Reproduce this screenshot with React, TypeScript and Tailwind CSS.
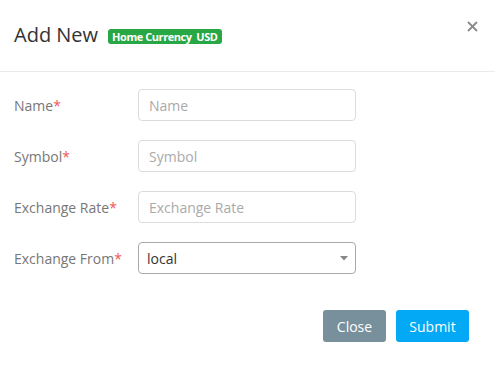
import { useState } from 'react';

const FONT = { fontFamily: '"Open Sans", "Liberation Sans", sans-serif' };

function Row({ label, children }: { label: string; children: React.ReactNode }) {
  return (
    <div className="flex items-center">
      <label className="w-[124px] shrink-0 text-[14px] text-[#777]">
        {label}
        <span className="text-[#f0555a]">*</span>
      </label>
      {children}
    </div>
  );
}

export default function App() {
  const [form, setForm] = useState({ name: '', symbol: '', rate: '', from: 'local' });

  const input =
    'w-[218px] h-[32px] rounded-[4px] border border-[#dcdcdc] bg-white px-[10px] text-[14px] text-[#444] outline-none placeholder:text-[#aaa]';

  return (
    <div className="w-[495px] h-[379px] bg-white" style={FONT}>
      {/* header */}
      <div className="relative flex items-center h-[72px] px-[14px] border-b border-[#e9ecef]">
        <h2 className="text-[20px] text-[#333] leading-none pb-[1px]">Add New</h2>
        <span className="ml-[10px] mt-[1px] rounded-[3px] bg-[#28a745] px-[4px] h-[15px] leading-[15px] text-[11px] font-bold text-white tracking-[-0.45px]">
          Home Currency&nbsp; USD
        </span>
        <button className="absolute right-[17px] top-[20px] w-[12px] h-[12px] flex items-center justify-center">
          <svg width="11" height="11" viewBox="0 0 11 11">
            <path d="M1 1 L10 10 M10 1 L1 10" stroke="#8a8a8a" strokeWidth="1.8" />
          </svg>
        </button>
      </div>

      {/* body */}
      <div className="flex flex-col gap-[19px] px-[14px] pt-[17px]">
        <Row label="Name">
          <input
            className={input}
            placeholder="Name"
            value={form.name}
            onChange={(e) => setForm({ ...form, name: e.target.value })}
          />
        </Row>
        <Row label="Symbol">
          <input
            className={input}
            placeholder="Symbol"
            value={form.symbol}
            onChange={(e) => setForm({ ...form, symbol: e.target.value })}
          />
        </Row>
        <Row label="Exchange Rate">
          <input
            className={input}
            placeholder="Exchange Rate"
            value={form.rate}
            onChange={(e) => setForm({ ...form, rate: e.target.value })}
          />
        </Row>
        <Row label="Exchange From">
          <div className="relative">
            <select
              className="w-[218px] h-[32px] appearance-none rounded-[4px] border border-[#aaa] bg-white pl-[8px] text-[14px] text-[#333] outline-none"
              value={form.from}
              onChange={(e) => setForm({ ...form, from: e.target.value })}
            >
              <option value="local">local</option>
            </select>
            <svg className="absolute right-[8px] top-[14px]" width="8" height="5" viewBox="0 0 8 5">
              <path d="M0 0 H8 L4 4.5 Z" fill="#888" />
            </svg>
          </div>
        </Row>
      </div>

      {/* footer */}
      <div className="flex justify-end gap-[10px] pr-[26px] pt-[36px]">
        <button className="h-[32px] w-[63px] rounded-[3px] bg-[#78909c] text-[14px] text-white">Close</button>
        <button className="h-[32px] w-[73px] rounded-[3px] bg-[#03a9f4] text-[14px] text-white">Submit</button>
      </div>
    </div>
  );
}
